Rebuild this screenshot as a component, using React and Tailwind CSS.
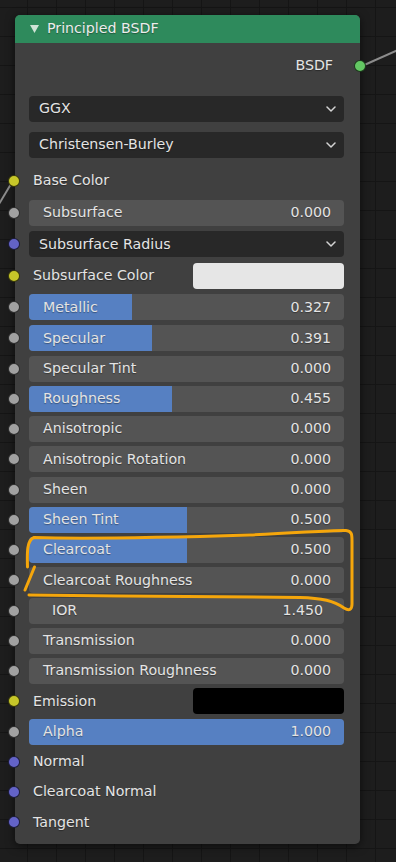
import React from 'react';

const YELLOW = 'bg-[#c7c729]';
const GRAY = 'bg-[#a1a1a1]';
const PURPLE = 'bg-[#6363c7]';

const rows = [
    { kind: 'label', socket: YELLOW, label: 'Base Color' },
    { kind: 'slider', socket: GRAY, label: 'Subsurface', value: '0.000', fill: 0 },
    { kind: 'dropdown', socket: PURPLE, label: 'Subsurface Radius' },
    { kind: 'color', socket: YELLOW, label: 'Subsurface Color', swatch: 'bg-[#e6e6e6]' },
    { kind: 'slider', socket: GRAY, label: 'Metallic', value: '0.327', fill: 0.327 },
    { kind: 'slider', socket: GRAY, label: 'Specular', value: '0.391', fill: 0.391 },
    { kind: 'slider', socket: GRAY, label: 'Specular Tint', value: '0.000', fill: 0 },
    { kind: 'slider', socket: GRAY, label: 'Roughness', value: '0.455', fill: 0.455 },
    { kind: 'slider', socket: GRAY, label: 'Anisotropic', value: '0.000', fill: 0 },
    { kind: 'slider', socket: GRAY, label: 'Anisotropic Rotation', value: '0.000', fill: 0 },
    { kind: 'slider', socket: GRAY, label: 'Sheen', value: '0.000', fill: 0 },
    { kind: 'slider', socket: GRAY, label: 'Sheen Tint', value: '0.500', fill: 0.5 },
    { kind: 'slider', socket: GRAY, label: 'Clearcoat', value: '0.500', fill: 0.5 },
    { kind: 'slider', socket: GRAY, label: 'Clearcoat Roughness', value: '0.000', fill: 0 },
    { kind: 'number', socket: GRAY, label: 'IOR', value: '1.450' },
    { kind: 'slider', socket: GRAY, label: 'Transmission', value: '0.000', fill: 0 },
    { kind: 'slider', socket: GRAY, label: 'Transmission Roughness', value: '0.000', fill: 0 },
    { kind: 'color', socket: YELLOW, label: 'Emission', swatch: 'bg-black' },
    { kind: 'slider', socket: GRAY, label: 'Alpha', value: '1.000', fill: 1 },
    { kind: 'label', socket: PURPLE, label: 'Normal' },
    { kind: 'label', socket: PURPLE, label: 'Clearcoat Normal' },
    { kind: 'label', socket: PURPLE, label: 'Tangent' },
];

function Chevron() {
    return (
        <svg width="10" height="6" viewBox="0 0 10 6" className="shrink-0">
            <polyline points="1,1 5,5 9,1" fill="none" stroke="#d4d4d4" strokeWidth="1.5" strokeLinecap="round" strokeLinejoin="round" />
        </svg>
    );
}

function Socket({ color }) {
    return (
        <span className={`absolute left-[-21px] top-1/2 -translate-y-1/2 w-[12px] h-[12px] rounded-full border border-black/70 ${color}`}></span>
    );
}

function Dropdown({ label }) {
    return (
        <div className="h-[26px] w-full rounded-[4px] bg-[#282828] flex items-center justify-between pl-[10px] pr-[8px]">
            <span>{label}</span>
            <Chevron />
        </div>
    );
}

function Row({ row, tall }) {
    return (
        <div className={`relative flex items-center ${tall ? 'h-[31.6px]' : 'h-[30.25px]'}`}>
            <Socket color={row.socket} />
            {row.kind === 'label' && <span className="pl-[4px]">{row.label}</span>}
            {row.kind === 'dropdown' && <Dropdown label={row.label} />}
            {row.kind === 'color' && (
                <div className="w-full flex items-center justify-between">
                    <span className="pl-[4px]">{row.label}</span>
                    <span className={`w-[151px] h-[26px] rounded-[4px] ${row.swatch}`}></span>
                </div>
            )}
            {row.kind === 'slider' && (
                <div className="relative w-full h-[26px] rounded-[4px] bg-[#545454] overflow-hidden">
                    {row.fill > 0 && (
                        <div className="absolute left-0 top-0 bottom-0 bg-[#5680c2]" style={{ width: `${row.fill * 100}%` }}></div>
                    )}
                    <div className="relative h-full flex items-center justify-between pl-[14px] pr-[13px]">
                        <span>{row.label}</span>
                        <span>{row.value}</span>
                    </div>
                </div>
            )}
            {row.kind === 'number' && (
                <div className="w-full h-[26px] rounded-[4px] bg-[#545454] flex items-center justify-between pl-[23px] pr-[21px]">
                    <span>{row.label}</span>
                    <span>{row.value}</span>
                </div>
            )}
        </div>
    );
}

export default function App() {
    return (
        <div className="relative w-[396px] h-[862px] overflow-hidden bg-[#1d1d1d] bg-[linear-gradient(to_right,#151515_1px,transparent_1px),linear-gradient(to_bottom,#151515_1px,transparent_1px)] bg-[length:29px_29px] bg-[position:-2px_7px] pt-[15px] pl-[15px] font-['DejaVu_Sans',sans-serif] text-[14.2px] text-[#e4e4e4] [text-shadow:0_1px_1px_rgba(0,0,0,0.35)]">
            {/* wires */}
            <svg className="absolute inset-0 pointer-events-none" width="396" height="862">
                <line x1="362" y1="66" x2="398" y2="50" stroke="#8c8c8c" strokeWidth="2" />
                <line x1="11" y1="184" x2="-1" y2="204" stroke="#8c8c8c" strokeWidth="2" />
            </svg>

            <div className="relative w-[345px] rounded-[5px] bg-[rgba(66,66,66,0.95)] shadow-[0_2px_10px_rgba(0,0,0,0.6)]">
                <div className="h-[28px] rounded-t-[5px] bg-[#2e8a5c] flex items-center pl-[15px] text-[#ececec]">
                    <svg width="9" height="8" viewBox="0 0 9 8" className="mr-[8px]">
                        <polygon points="0,0 9,0 4.5,8" fill="#cfe3d6" />
                    </svg>
                    <span>Principled BSDF</span>
                </div>

                <div className="pl-[14px] pr-[16px] pb-[6.5px]">
                    <div className="relative h-[30px] mt-[8px] flex items-center justify-end pr-[11px]">
                        <span>BSDF</span>
                        <span className="absolute right-[-22px] top-1/2 -translate-y-1/2 w-[12px] h-[12px] rounded-full border border-black/70 bg-[#63c763]"></span>
                    </div>
                    <div className="mt-[15px]">
                        <Dropdown label="GGX" />
                    </div>
                    <div className="mt-[10px]">
                        <Dropdown label="Christensen-Burley" />
                    </div>
                    <div className="mt-[7.2px]">
                        {rows.map((row, index) => (
                            <Row key={index} row={row} tall={index < 5} />
                        ))}
                    </div>
                </div>
            </div>

            {/* hand drawn highlight */}
            <svg className="absolute inset-0 pointer-events-none" width="396" height="862">
                <path
                    d="M27.5,567 C27,552 27,540 34,537.5 C80,539 150,538 250,535 C300,533 330,530 346,530.5 C352,531 352,535 352,541 L352,604 C352,610 349,611 344,608 C334,601 322,598 300,597.5 C220,597 120,596 29,595"
                    fill="none"
                    stroke="#f5a60b"
                    strokeWidth="3"
                    strokeLinecap="round"
                    strokeLinejoin="round"
                />
                <path d="M34.5,567 L25,590" fill="none" stroke="#f5a60b" strokeWidth="3" strokeLinecap="round" />
            </svg>
        </div>
    );
}
